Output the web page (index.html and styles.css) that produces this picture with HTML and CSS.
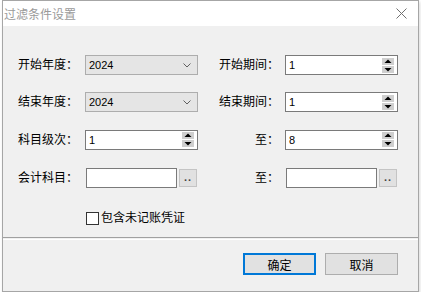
FILE: index.html
```html
<!DOCTYPE html>
<html lang="zh-CN">
<head>
    <meta charset="UTF-8">
    <meta name="viewport" content="width=device-width, initial-scale=1.0">
    <title>过滤条件设置</title>
    <link rel="stylesheet" href="styles.css">
</head>
<body>
    <div class="dialog">
        <!-- 标题栏 -->
        <div class="titlebar">
            <span class="title">过滤条件设置</span>
            <svg class="close-icon" width="11" height="11" viewBox="0 0 11 11">
                <path d="M0.5 0.5L10.5 10.5M10.5 0.5L0.5 10.5" stroke="#707070" stroke-width="1" fill="none"/>
            </svg>
        </div>

        <!-- 条件区 -->
        <div class="content">
            <div class="form-grid">
                <span class="lbl">开始年度：</span>
                <div class="combo">
                    <span class="value">2024</span>
                    <svg width="8" height="5" viewBox="0 0 8 5"><path d="M0.5 0.5L4 4L7.5 0.5" fill="none" stroke="#606060"/></svg>
                </div>
                <span class="lbl lbl-right">开始期间：</span>
                <div class="spin">
                    <span class="value">1</span>
                    <svg class="spin-btns" width="12" height="15" viewBox="0 0 12 15">
                        <rect x="0" y="0" width="12" height="7" fill="#cfcfcf"/>
                        <rect x="0" y="8" width="12" height="7" fill="#cfcfcf"/>
                        <path d="M6 1.5L9.5 5H2.5Z" fill="#000"/>
                        <path d="M2.5 10H9.5L6 13.5Z" fill="#000"/>
                    </svg>
                </div>

                <span class="lbl">结束年度：</span>
                <div class="combo">
                    <span class="value">2024</span>
                    <svg width="8" height="5" viewBox="0 0 8 5"><path d="M0.5 0.5L4 4L7.5 0.5" fill="none" stroke="#606060"/></svg>
                </div>
                <span class="lbl lbl-right">结束期间：</span>
                <div class="spin">
                    <span class="value">1</span>
                    <svg class="spin-btns" width="12" height="15" viewBox="0 0 12 15">
                        <rect x="0" y="0" width="12" height="7" fill="#cfcfcf"/>
                        <rect x="0" y="8" width="12" height="7" fill="#cfcfcf"/>
                        <path d="M6 1.5L9.5 5H2.5Z" fill="#000"/>
                        <path d="M2.5 10H9.5L6 13.5Z" fill="#000"/>
                    </svg>
                </div>

                <span class="lbl">科目级次：</span>
                <div class="spin">
                    <span class="value">1</span>
                    <svg class="spin-btns" width="12" height="15" viewBox="0 0 12 15">
                        <rect x="0" y="0" width="12" height="7" fill="#cfcfcf"/>
                        <rect x="0" y="8" width="12" height="7" fill="#cfcfcf"/>
                        <path d="M6 1.5L9.5 5H2.5Z" fill="#000"/>
                        <path d="M2.5 10H9.5L6 13.5Z" fill="#000"/>
                    </svg>
                </div>
                <span class="lbl lbl-right">至：</span>
                <div class="spin">
                    <span class="value">8</span>
                    <svg class="spin-btns" width="12" height="15" viewBox="0 0 12 15">
                        <rect x="0" y="0" width="12" height="7" fill="#cfcfcf"/>
                        <rect x="0" y="8" width="12" height="7" fill="#cfcfcf"/>
                        <path d="M6 1.5L9.5 5H2.5Z" fill="#000"/>
                        <path d="M2.5 10H9.5L6 13.5Z" fill="#000"/>
                    </svg>
                </div>

                <span class="lbl">会计科目：</span>
                <div class="picker">
                    <div class="textbox"></div>
                    <button class="dots-btn">..</button>
                </div>
                <span class="lbl lbl-right">至：</span>
                <div class="picker">
                    <div class="textbox"></div>
                    <button class="dots-btn">..</button>
                </div>
            </div>

            <label class="check">
                <span class="check-box"></span>包含未记账凭证
            </label>
        </div>

        <div class="separator"></div>

        <!-- 按钮区 -->
        <div class="footer">
            <button class="btn btn-default">确定</button>
            <button class="btn">取消</button>
        </div>
    </div>
</body>
</html>
```

FILE: styles.css
```css
* {
    box-sizing: border-box;
}

body {
    margin: 0;
    background: #ffffff;
    font-family: 'Liberation Sans', 'Noto Sans CJK SC', sans-serif;
    font-size: 12px;
    color: #000;
}

/* 对话框外框 */
.dialog {
    width: 417px;
    height: 292px;
    margin-left: 2px;
    border: 1px solid #a6a6a6;
    background: #f0f0f0;
    display: flex;
    flex-direction: column;
    box-shadow: 1px 2px 3px rgba(0, 0, 0, 0.15);
}

/* 标题栏 */
.titlebar {
    height: 25px;
    background: #fff;
    display: flex;
    align-items: center;
    justify-content: space-between;
    padding: 0 11px 0 1px;
}

.title {
    font-family: 'Noto Sans CJK SC', sans-serif;
    font-size: 12px;
    color: #9a9a9a;
}

.close-icon {
    display: block;
}

/* 条件区 */
.content {
    height: 211px;
    padding: 29px 0 0 15px;
}

.form-grid {
    display: grid;
    grid-template-columns: 67px 113px 87px 113px;
    grid-template-rows: 20px 20px 20px 20px;
    row-gap: 17px;
    align-items: center;
}

/* 下面两行间距略大 */
.form-grid > :nth-child(n+9) {
    margin-top: 1px;
}

.form-grid > :nth-child(n+13) {
    margin-top: 4px;
}

.lbl {
    white-space: nowrap;
    line-height: 20px;
}

.lbl-right {
    text-align: right;
    padding-right: 6px;
}

.value {
    flex: 1;
    font-size: 11px;
    padding-left: 3px;
}

.combo {
    height: 20px;
    display: flex;
    align-items: center;
    background: #e5e5e5;
    border: 1px solid #adadad;
    padding-right: 6px;
}

.spin {
    height: 20px;
    display: flex;
    align-items: center;
    background: #fff;
    border: 1px solid #7a7a7a;
    padding-right: 3px;
}

.spin-btns {
    display: block;
}

.picker {
    display: flex;
    align-items: center;
    gap: 2px;
    padding-left: 1px;
}

.textbox {
    width: 91px;
    height: 20px;
    background: #fff;
    border: 1px solid #7a7a7a;
}

.dots-btn {
    width: 18px;
    height: 18px;
    padding: 0 0 3px;
    border: 1px solid #c4c4c4;
    background: #e1e1e1;
    font-family: 'Liberation Sans', sans-serif;
    font-size: 11px;
    font-weight: bold;
    line-height: 1;
    color: #444;
    letter-spacing: 1px;
    display: flex;
    align-items: flex-end;
    justify-content: center;
}

/* 复选框 */
.check {
    display: flex;
    align-items: center;
    gap: 2px;
    margin: 25px 0 0 68px;
    line-height: 14px;
}

.check-box {
    width: 13px;
    height: 13px;
    background: #fff;
    border: 1px solid #333;
}

/* 分隔线 */
.separator {
    height: 3px;
    border-top: 1px solid #a0a0a0;
    border-bottom: 1px solid #fff;
}

/* 按钮区 */
.footer {
    flex: 1;
    display: flex;
    justify-content: flex-end;
    align-items: flex-start;
    gap: 9px;
    padding: 13px 20px 0 0;
}

.btn {
    width: 73px;
    height: 22px;
    border: 1px solid #adadad;
    background: #e1e1e1;
    font-family: 'Liberation Sans', 'Noto Sans CJK SC', sans-serif;
    font-size: 12px;
    color: #000;
    padding: 0;
}

.btn-default {
    border: 2px solid #0078d7;
}
```
